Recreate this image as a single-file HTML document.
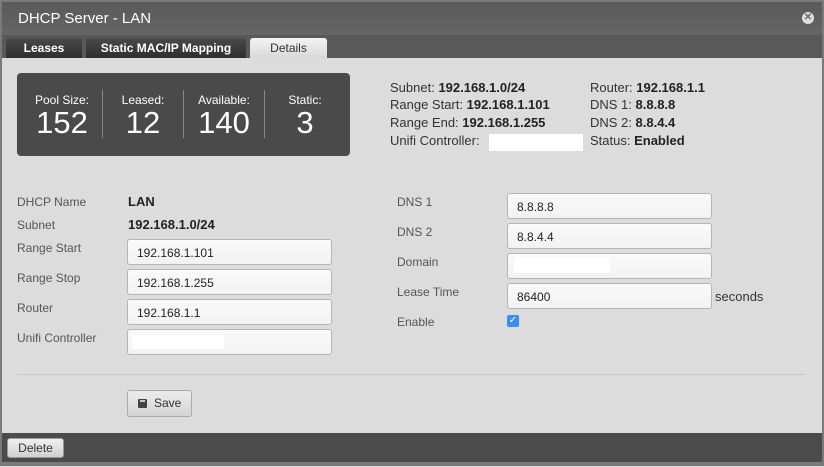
<!DOCTYPE html>
<html><head><style>
*{margin:0;padding:0;box-sizing:border-box}
body{width:824px;height:467px;overflow:hidden;background:#d8d8d8;font-family:"Liberation Sans",sans-serif;position:relative}
.a{position:absolute}
.lbl{color:#555;font-size:12px}
.inp{position:absolute;width:205px;height:26px;background:linear-gradient(#fafafa,#f2f2f2);border:1px solid #b5b5b5;border-radius:3px;font-size:12px;color:#222;padding:6px 0 0 9px}
.w{position:absolute;background:#fff}
.r{font-size:13px;color:#333;position:absolute}
.r b{color:#222}
.st{position:absolute;color:#fff;text-align:center;width:80px}
.st .l{font-size:12px;margin-top:0}
.st .n{font-size:31px;line-height:32px}
.dv{position:absolute;top:17px;width:1px;height:48px;background:#888}
</style></head><body>
<div class="a" style="left:0;top:0;width:824px;height:466px;background:#7a7a7a"></div>
<div class="a" style="left:2px;top:2px;width:820px;height:33px;background:linear-gradient(#5a5a5a,#656565)"></div>
<div class="a" style="left:18px;top:10px;color:#fff;font-size:15px">DHCP Server - LAN</div>
<div class="a" style="left:802px;top:12px;width:12px;height:12px;border-radius:50%;background:#ddd;color:#666;font-size:10px;font-weight:bold;text-align:center;line-height:12px">✕</div>
<div class="a" style="left:2px;top:35px;width:820px;height:23px;background:#595959"></div>
<div class="a" style="left:6px;top:38px;width:76px;height:20px;background:linear-gradient(#4a4a4a,#2e2e2e);border-radius:3px 3px 0 0;color:#fff;font-weight:bold;font-size:12px;text-align:center;line-height:21px">Leases</div>
<div class="a" style="left:86px;top:38px;width:160px;height:20px;background:linear-gradient(#4a4a4a,#2e2e2e);border-radius:3px 3px 0 0;color:#fff;font-weight:bold;font-size:12px;text-align:center;line-height:21px">Static MAC/IP Mapping</div>
<div class="a" style="left:250px;top:38px;width:77px;height:20px;background:linear-gradient(#f4f4f4,#d8d8d8);border-radius:3px 3px 0 0;color:#333;font-size:12px;text-align:center;line-height:21px">Details</div>
<div class="a" style="left:2px;top:58px;width:820px;height:375px;background:#dcdcdc"></div>
<div class="a" style="left:17px;top:73px;width:333px;height:83px;background:#4a4a4a;border-radius:4px">
<div class="st" style="left:5px;top:20px"><div class="l">Pool Size:</div><div class="n">152</div></div>
<div class="dv" style="left:85px"></div>
<div class="st" style="left:86px;top:20px"><div class="l">Leased:</div><div class="n">12</div></div>
<div class="dv" style="left:166px"></div>
<div class="st" style="left:167px;top:20px"><div class="l">Available:</div><div class="n">140</div></div>
<div class="dv" style="left:247px"></div>
<div class="st" style="left:248px;top:20px"><div class="l">Static:</div><div class="n">3</div></div>
</div>
<div class="r" style="left:390px;top:80px">Subnet: <b>192.168.1.0/24</b></div>
<div class="r" style="left:390px;top:97px">Range Start: <b>192.168.1.101</b></div>
<div class="r" style="left:390px;top:115px">Range End: <b>192.168.1.255</b></div>
<div class="r" style="left:390px;top:133px">Unifi Controller:</div>
<div class="w" style="left:489px;top:134px;width:94px;height:17px"></div>
<div class="r" style="left:590px;top:80px">Router: <b>192.168.1.1</b></div>
<div class="r" style="left:590px;top:97px">DNS 1: <b>8.8.8.8</b></div>
<div class="r" style="left:590px;top:115px">DNS 2: <b>8.8.4.4</b></div>
<div class="r" style="left:590px;top:133px">Status: <b>Enabled</b></div>
<div class="a lbl" style="left:17px;top:195px">DHCP Name</div>
<div class="a" style="left:128px;top:194px;font-size:13px;font-weight:bold;color:#222">LAN</div>
<div class="a lbl" style="left:17px;top:218px">Subnet</div>
<div class="a" style="left:128px;top:217px;font-size:13px;font-weight:bold;color:#222">192.168.1.0/24</div>
<div class="a lbl" style="left:17px;top:241px">Range Start</div>
<div class="a lbl" style="left:17px;top:271px">Range Stop</div>
<div class="a lbl" style="left:17px;top:301px">Router</div>
<div class="a lbl" style="left:17px;top:331px">Unifi Controller</div>
<div class="inp" style="left:127px;top:239px">192.168.1.101</div>
<div class="inp" style="left:127px;top:269px">192.168.1.255</div>
<div class="inp" style="left:127px;top:299px">192.168.1.1</div>
<div class="inp" style="left:127px;top:329px"></div>
<div class="w" style="left:132px;top:335px;width:92px;height:14px"></div>
<div class="a lbl" style="left:397px;top:195px">DNS 1</div>
<div class="a lbl" style="left:397px;top:225px">DNS 2</div>
<div class="a lbl" style="left:397px;top:255px">Domain</div>
<div class="a lbl" style="left:397px;top:285px">Lease Time</div>
<div class="a lbl" style="left:397px;top:315px">Enable</div>
<div class="inp" style="left:507px;top:193px">8.8.8.8</div>
<div class="inp" style="left:507px;top:223px">8.8.4.4</div>
<div class="inp" style="left:507px;top:253px"></div>
<div class="w" style="left:514px;top:258px;width:96px;height:15px"></div>
<div class="inp" style="left:507px;top:283px">86400</div>
<div class="a" style="left:715px;top:289px;font-size:13px;color:#333">seconds</div>
<div class="a" style="left:507px;top:315px;width:12px;height:12px;background:#3b8ef0;border-radius:2px;color:#fff;font-size:10px;line-height:12px;text-align:center">✓</div>
<div class="a" style="left:17px;top:374px;width:789px;height:1px;background:#c6c6c6"></div>
<div class="a" style="left:127px;top:390px;width:65px;height:27px;background:linear-gradient(#ececec,#d4d4d4);border:1px solid #aaa;border-radius:3px;font-size:12px;color:#333;line-height:25px;padding-left:26px">Save</div>
<div class="a" style="left:138px;top:399px;width:9px;height:9px;background:#444;border-radius:1px"></div>
<div class="a" style="left:140px;top:400px;width:5px;height:2px;background:#ccc"></div>
<div class="a" style="left:2px;top:433px;width:820px;height:29px;background:#4b4b4b"></div>
<div class="a" style="left:7px;top:438px;width:57px;height:20px;background:linear-gradient(#f0f0f0,#d0d0d0);border:1px solid #999;border-radius:3px;font-size:12px;color:#333;text-align:center;line-height:18px">Delete</div>
<div class="a" style="left:0;top:466px;width:824px;height:1px;background:#d8d8d8"></div>
</body></html>
